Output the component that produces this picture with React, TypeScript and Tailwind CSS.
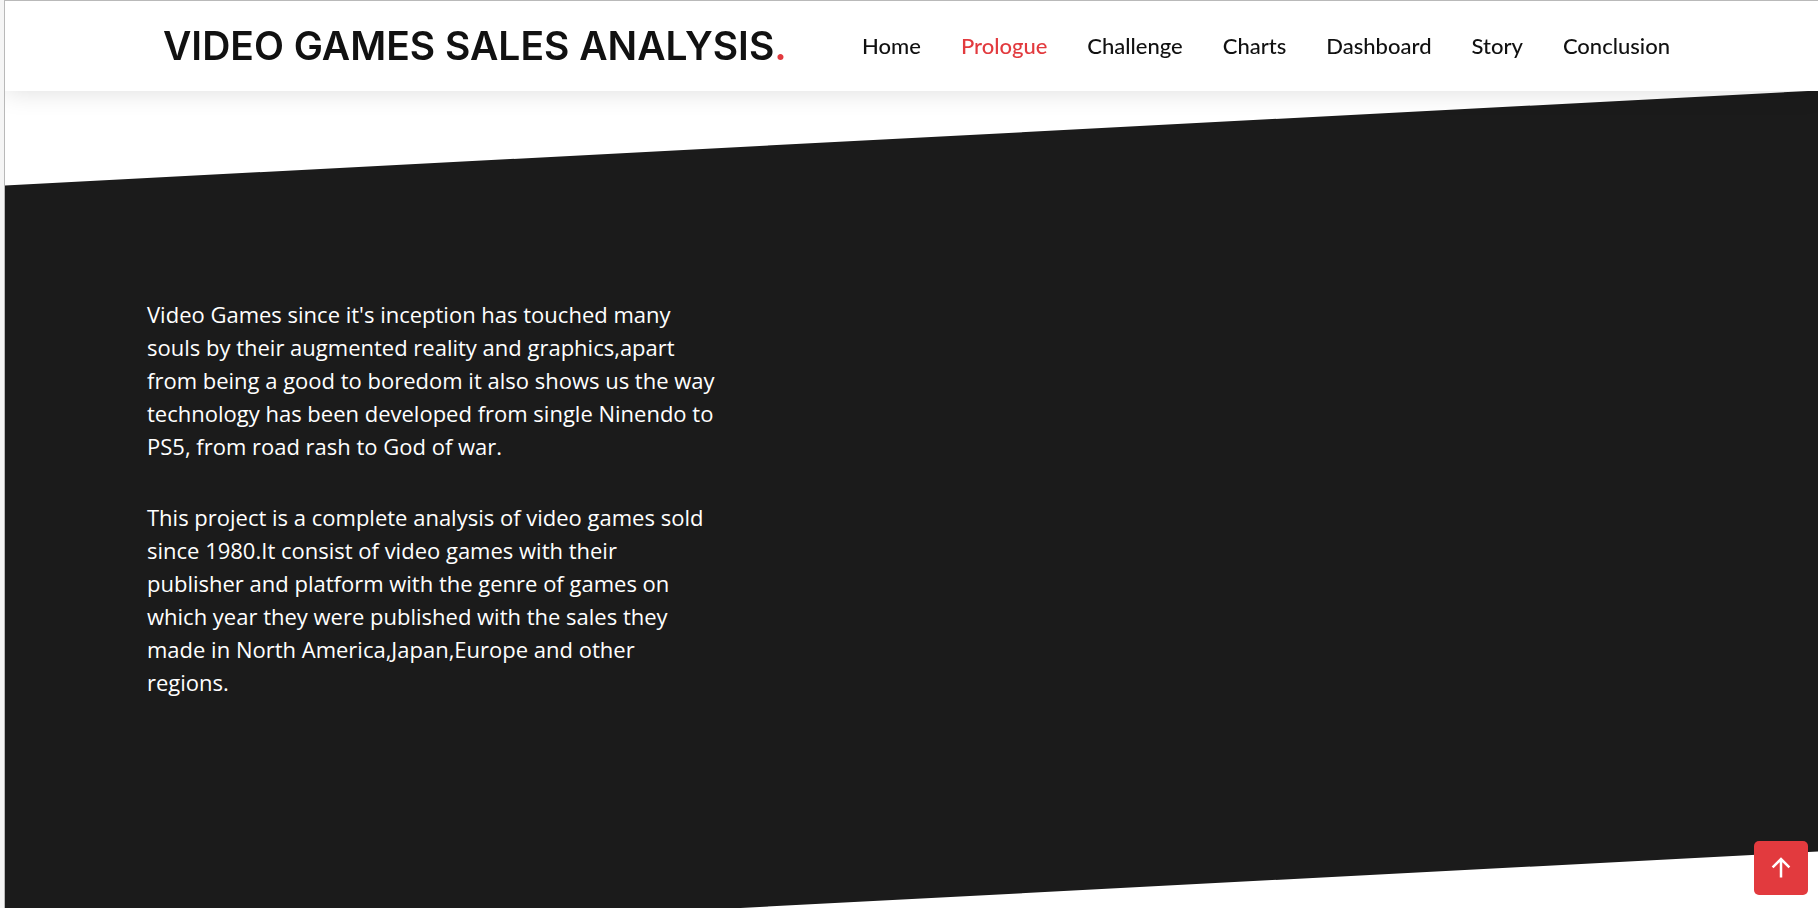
import React from "react";

const links = ["Home", "Prologue", "Challenge", "Charts", "Dashboard", "Story", "Conclusion"];

function Header() {
  return (
    <header className="sticky top-0 z-20 flex h-[90px] shrink-0 items-center justify-between bg-white pl-[158px] pr-[148px] shadow-[0_0_25px_rgba(0,0,0,0.14)]">
      <a href="#home" className="whitespace-nowrap font-['Inter',sans-serif] text-[39px] leading-[46px] font-semibold text-[#111111]">
        VIDEO GAMES SALES ANALYSIS<span className="text-[#e23a3e]">.</span>
      </a>
      <nav aria-label="Main" className="flex gap-10 whitespace-nowrap font-['Lato',sans-serif] text-[22px] leading-7 font-medium text-[#111111]">
        {links.map((name) => (
          <a
            key={name}
            href={`#${name.toLowerCase()}`}
            aria-current={name === "Prologue" ? "true" : undefined}
            className="hover:text-[#e23a3e] aria-[current]:text-[#e23a3e]"
          >
            {name}
          </a>
        ))}
      </nav>
    </header>
  );
}

function Prologue() {
  return (
    <section id="prologue" className="mt-[47px] grid shrink-0">
      <div aria-hidden="true" className="-skew-y-3 bg-[#1b1b1b] [grid-area:1/1]" />
      <div className="z-10 flex max-w-[712px] flex-col gap-[38px] pt-40 pb-[200px] pl-[142px] font-['Open_Sans',sans-serif] text-[22px] leading-[33px] text-white [grid-area:1/1]">
        <p>
          Video Games since it's inception has touched many souls by their augmented reality and
          graphics,apart from being a good to boredom it also shows us the way technology has been
          developed from single Ninendo to PS5, from road rash to God of war.
        </p>
        <p>
          This project is a complete analysis of video games sold since 1980.It consist of video
          games with their publisher and platform with the genre of games on which year they were
          published with the sales they made in North America,Japan,Europe and other regions.
        </p>
      </div>
    </section>
  );
}

export default function App() {
  return (
    <div className="h-screen bg-[#f5f5f5] pl-1">
      <div className="flex h-full flex-col overflow-x-hidden overflow-y-auto border-t border-l border-[#b9b9b9] bg-white [scrollbar-width:none]">
        <Header />
        <Prologue />
      </div>
      <button
        type="button"
        aria-label="Back to top"
        className="fixed right-[10px] bottom-[13px] z-30 flex size-[54px] items-center justify-center rounded-[5px] bg-[#e23a3e] pb-0.5 text-white"
      >
        <svg viewBox="0 0 24 24" className="size-6" fill="none" stroke="currentColor" strokeWidth="2.5" aria-hidden="true">
          <path d="M12 22.5V4M3.6 12.4L12 4l8.4 8.4" />
        </svg>
      </button>
    </div>
  );
}
